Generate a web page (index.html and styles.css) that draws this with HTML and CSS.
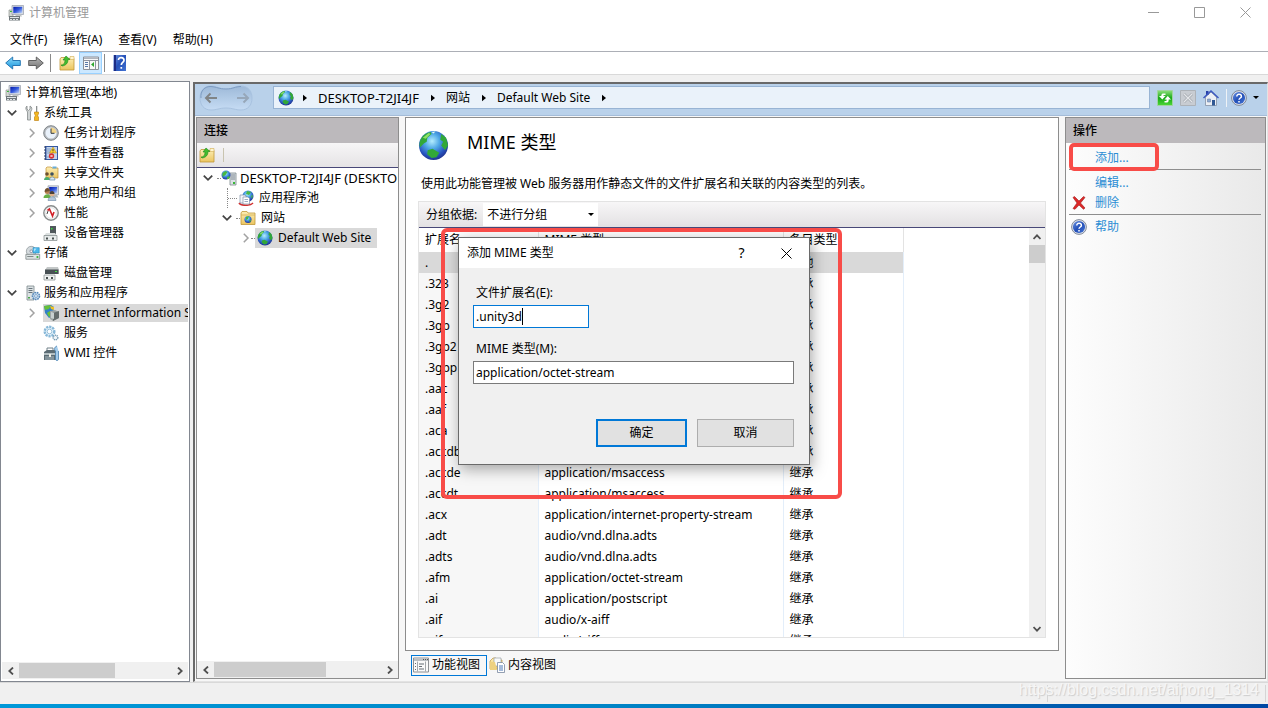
FILE: index.html
```html
<!DOCTYPE html>
<html lang="zh-CN">
<head>
<meta charset="utf-8">
<title>计算机管理</title>
<link rel="stylesheet" href="styles.css">
</head>
<body>
<svg class="sprite" aria-hidden="true">
  <defs>
    <radialGradient id="sea" cx=".45" cy=".35" r=".65"><stop offset="0" stop-color="#b4ecfd"/><stop offset=".4" stop-color="#4fa8e6"/><stop offset=".8" stop-color="#2650bc"/><stop offset="1" stop-color="#203490"/></radialGradient>
    <linearGradient id="blue" x1="0" y1="0" x2="1" y2="1"><stop offset="0" stop-color="#6a92e4"/><stop offset=".5" stop-color="#2450b8"/><stop offset="1" stop-color="#4474d4"/></linearGradient>
    <linearGradient id="screen" x1="0" y1="0" x2="1" y2="1"><stop offset="0" stop-color="#0418a8"/><stop offset=".5" stop-color="#3258dc"/><stop offset="1" stop-color="#c8dcfa"/></linearGradient>
    <linearGradient id="yellow" x1="0" y1="0" x2="0" y2="1"><stop offset="0" stop-color="#fdeeb4"/><stop offset="1" stop-color="#ebc560"/></linearGradient>
    <linearGradient id="green" x1="0" y1="0" x2="0" y2="1"><stop offset="0" stop-color="#8ee07c"/><stop offset=".5" stop-color="#18a818"/><stop offset="1" stop-color="#4cd838"/></linearGradient>
    <linearGradient id="back" x1="0" y1="0" x2="0" y2="1"><stop offset="0" stop-color="#8cdcfa"/><stop offset="1" stop-color="#1894dc"/></linearGradient>
    <linearGradient id="grey" x1="0" y1="0" x2="0" y2="1"><stop offset="0" stop-color="#b8b8b8"/><stop offset="1" stop-color="#747474"/></linearGradient>
    <linearGradient id="pill" x1="0" y1="0" x2="0" y2="1"><stop offset="0" stop-color="#9db9d8"/><stop offset="1" stop-color="#c6dcf4"/></linearGradient>
  </defs>
  <symbol id="i-computer" viewBox="0 0 16 16"><path d="M1 5h4v7H1z" fill="#d4d8d4" stroke="#808880" stroke-width=".6"/><path d="M2 6h2v1H2z" fill="#30c030"/><path d="M4 .5h11.5v9H4z" fill="#d8dce0" stroke="#8a90a0" stroke-width=".6"/><path d="M5.3 1.8h9v6.4h-9z" fill="url(#screen)"/><path d="M8 9.5h5l1 2H7z" fill="#c0c4c4"/><path d="M1 11h11v4.5H1z" fill="#70787c"/><path d="M2 12h9v1H2zm0 2h2v1H2zm3 0h2v1H5zm3 0h2v1H8z" fill="#dfe4e6"/></symbol>
  <symbol id="i-tools" viewBox="0 0 16 16"><path d="M2 1v3l1.500 1.500L5 4V1c2 1 2.500 3 1 5l-.5 1v8h-3V7L2 6C.4 4 .5 2 2 1z" fill="#d0d4d4" stroke="#868c8c" stroke-width=".8"/><path d="M11 1h1.300v6H11z" fill="#8c9090"/><path d="M9.500 7h4v2l-.8 1v1l.8 1v3.500h-4V12l.8-1v-1l-.8-1z" fill="#f4b820" stroke="#b87808" stroke-width=".6"/></symbol>
  <symbol id="i-clock" viewBox="0 0 16 16"><circle cx="8" cy="8" r="7.300" fill="#b8bcc0" stroke="#747a80" stroke-width=".9"/><circle cx="8" cy="8" r="5.500" fill="#e9f1fa"/><path d="M8 8V2.500A5.500 5.500 0 0 1 13.500 8z" fill="#f2d488"/><path d="M8 3.500V8.300h3.500" fill="none" stroke="#303840"/></symbol>
  <symbol id="i-event" viewBox="0 0 16 16"><path d="M2 1h13v14H2z" fill="#3458a0"/><path d="M3.500 2h10.500v12H3.500z" fill="#c4d4ec"/><path d="M1 2h2M1 5h2M1 8h2M1 11h2M1 14h2" stroke="#303c60"/><path d="M4 4h4M4 6h4M4 8h3M4 12h3" stroke="#6888b8" stroke-width=".7"/><path d="M10 2l3.500 6h-7z" fill="#fcd030" stroke="#b88808" stroke-width=".5"/><path d="M10 4v2M10 6.700v.8" stroke="#222" stroke-width=".8"/><circle cx="8.500" cy="11" r="2.700" fill="#d83030"/><path d="M7.500 10l2 2m0-2l-2 2" stroke="#fff" stroke-width=".8"/></symbol>
  <symbol id="i-shared" viewBox="0 0 16 16"><path d="M3 3l1-1h4l1 1h6v10H3z" fill="url(#yellow)" stroke="#c09038" stroke-width=".7"/><path d="M9.500 1.500h4v2h-4z" fill="#68acd8"/><circle cx="4" cy="9" r="1.800" fill="#6c5030"/><circle cx="9" cy="9" r="1.800" fill="#3c5060"/><path d="M1 15c0-4 6-4 6 0z" fill="#4cac6c"/><path d="M6.500 15c0-4 5.500-4 5.500 0z" fill="#d8e8f0" stroke="#5078a0" stroke-width=".6"/></symbol>
  <symbol id="i-users" viewBox="0 0 16 16"><path d="M5 .8h10.500v9H5z" fill="#d8dce4" stroke="#8890a0" stroke-width=".6"/><path d="M6.200 2h8v6.400h-8z" fill="url(#screen)"/><path d="M10 10h4l1.500 2.500H9z" fill="#b0b8bc"/><circle cx="4.300" cy="6.500" r="2.500" fill="#b88050"/><path d="M1.700 7c-.5-5 5.500-5 5.100-1z" fill="#705030"/><path d="M.5 13c0-5 7.500-5 7.500 0z" fill="#68b048"/><circle cx="9" cy="9" r="2.500" fill="#e0b088"/><path d="M6.500 9c0-4 5-4 5 0z" fill="#4a4038"/><path d="M5 15.500c0-5 8-5 8 0z" fill="#b4c8dc" stroke="#587898" stroke-width=".5"/></symbol>
  <symbol id="i-perf" viewBox="0 0 16 16"><circle cx="8" cy="8" r="7.200" fill="#f8f8f8" stroke="#888c8c" stroke-width="1.400"/><circle cx="8" cy="8" r="5.300" fill="#fff" stroke="#c8cccc" stroke-width=".5"/><path d="M4.500 5.500l2 -1.500 3 7 1.500-4" fill="none" stroke="#d02028" stroke-width="1.600"/><path d="M4 9l1-3" stroke="#444"/></symbol>
  <symbol id="i-device" viewBox="0 0 16 16"><path d="M7 1h6v9H7z" fill="#50585c"/><path d="M8 3h1.500v1.500H8z" fill="#38e038"/><path d="M3 8h9l2 3H1z" fill="#dce0e0"/><path d="M1 10.500h13v5H1z" fill="#e8ecec" stroke="#808888" stroke-width=".7"/><path d="M3 12.500h2v2H3zm6 0h2v2H9z" fill="#485050"/></symbol>
  <symbol id="i-storage" viewBox="0 0 18 16"><circle cx="7" cy="6" r="5.500" fill="#d4dadd" stroke="#8c9498" stroke-width=".8"/><circle cx="7" cy="6" r="1.500" fill="#fff" stroke="#889"/><path d="M9 2h7v6H9z" fill="#4cb8ec" stroke="#1880b8" stroke-width=".6"/><path d="M10 3h3L10 7z" fill="#b0e4fa"/><path d="M1 9.500h15.500v5.500H1z" fill="#dfe5e6" stroke="#707878" stroke-width=".8"/><path d="M2.500 12h7" stroke="#707878"/><path d="M13 11.500h2v2h-2z" fill="#30b030"/></symbol>
  <symbol id="i-disk" viewBox="0 0 16 16"><path d="M4 2h11l1 3v4H2V5z" fill="#c4c8c8"/><path d="M2 4.500h13.500V9H2z" fill="#485054"/><path d="M12 6h2v1h-2z" fill="#48e048"/><path d="M1 10h11v5H1z" fill="#f0f2f2" stroke="#808888" stroke-width=".7"/><path d="M3 12h2v2H3zm5 0h2v2H8z" fill="#485050"/></symbol>
  <symbol id="i-server" viewBox="0 0 16 16"><path d="M2 1h7v14H2z" fill="#dce2e4" stroke="#7c888c" stroke-width=".8"/><path d="M3.500 3.500h4M3.500 5.500h4M3.500 7.500h4" stroke="#68747c"/><path d="M3 12h2v1.500H3z" fill="#48a848"/><circle cx="11" cy="11" r="3.500" fill="#c8dcf0" stroke="#5888b8" stroke-width="1.600" stroke-dasharray="1.700 .7"/><circle cx="11" cy="11" r="1.400" fill="#fff" stroke="#5888b8" stroke-width=".7"/></symbol>
  <symbol id="i-iis" viewBox="0 0 16 16"><path d="M1 1l7-1 3 2-1 9-4 2-4-5z" fill="#3080c8"/><path d="M1 1l7-1-2 4-4 1zM4 8l3-2 2 4-3 2z" fill="#68c038"/><path d="M7 1l4 1v3L8 4z" fill="#f0c020"/><path d="M7 6l5-1 4 2v6l-6 3-3-2z" fill="#9ca4a4"/><path d="M10 8l6-2v7l-6 3z" fill="#646c6c"/><path d="M8 7l3 1v6l-3-1z" fill="#c8d0d0"/></symbol>
  <symbol id="i-gears" viewBox="0 0 16 16"><circle cx="6.500" cy="6.500" r="4.800" fill="#e0f0fa" stroke="#88b8d8" stroke-width="2.400" stroke-dasharray="2.200 .9"/><circle cx="6.500" cy="6.500" r="2.300" fill="#fff" stroke="#88b4d0" stroke-width=".8"/><circle cx="12.500" cy="12.500" r="2.300" fill="#f0f6fa" stroke="#789cb4" stroke-width="1.500" stroke-dasharray="1.200 .6"/></symbol>
  <symbol id="i-wmi" viewBox="0 0 16 16"><path d="M4 6V3h6v3" fill="none" stroke="#708088"/><path d="M1 7l3-2h9l2 2v8H1z" fill="#5c6c74"/><path d="M1 8h12v2H1z" fill="#b4c0c4"/><path d="M2 11h9v4H2z" fill="#84949c"/><path d="M6 9h2v3H6z" fill="#f0f0e8"/><path d="M14 1c-3 1-3 4-1.500 5v8c0 2 3 2 3 0V6" fill="#a4ccec" stroke="#4880b0" stroke-width=".8"/></symbol>
  <symbol id="i-globe" viewBox="0 0 16 16"><circle cx="8" cy="8" r="7.500" fill="url(#sea)"/><path d="M1 9c-1-4 2-7.500 5.500-8L7 2 4.800 4 4.500 6 3 7zM12 2l2.500 2 1 4-1.500 2.500L12 8l1-2-1.500-1zM5 10.500l2.500-.8 3.500 2L9.500 14 7 14.500l-2.300-2z" fill="#32a838"/><path d="M2.500 4l3-2.500 1 .5L4 4.500z" fill="#8fe068"/><path d="M7 1l1 .8L9 .8z" fill="#e4faf4"/></symbol>
  <symbol id="i-folderup" viewBox="0 0 16 16"><path d="M1 4l1-1.500h5l1 1h7V15H1z" fill="url(#yellow)" stroke="#c09838" stroke-width=".8"/><path d="M11 1.500h4v3h-4z" fill="#fff5d0" stroke="#d0ac50" stroke-width=".6"/><path d="M2 10c3 0 4-2 4-5H4L7 1l4 3.500H9C9 8 7 10.500 3 11z" fill="#44bc30" stroke="#208818" stroke-width=".6"/></symbol>
  <symbol id="i-panes" viewBox="0 0 16 14"><path d="M.5 1h15v12.500H.5z" fill="#f8f8f8" stroke="#8c9098"/><path d="M1 1.500h14v1.500H1z" fill="#b0b4bc"/><path d="M1 4.500h14M6.500 5v8M12.500 5v8" stroke="#9094a0"/><path d="M2 6.500h3M2 8.500h3M2 10.500h3" stroke="#5878a8"/><path d="M11 6v5L8 8.500z" fill="#30a830"/></symbol>
  <symbol id="i-book" viewBox="0 0 14 16"><path d="M.5 0H13v16H.5z" fill="url(#blue)"/><path d="M1 0h2v16H1z" fill="#1c2c84"/><path d="M5.500 5c0-3.500 5.500-3 5.500.2C11 7.500 8.300 7.500 8.300 10M8.300 12v1.800" fill="none" stroke="#fff" stroke-width="1.700"/></symbol>
  <symbol id="i-help" viewBox="0 0 16 16"><circle cx="8" cy="8" r="7.400" fill="#dfe3ec" stroke="#747e90" stroke-width=".9"/><circle cx="8" cy="8" r="6.100" fill="url(#blue)"/><path d="M5.800 6.400c0-3 4.600-2.600 4.600 0C10.400 8 8 8 8 9.800M8 11v1.500" fill="none" stroke="#fff" stroke-width="1.500"/></symbol>
  <symbol id="i-back" viewBox="0 0 16 14"><path d="M.7 7l7-6v3.500h7.600v5H7.700V13z" fill="url(#back)" stroke="#2878b4"/></symbol>
  <symbol id="i-forward" viewBox="0 0 16 14"><path d="M15.300 7l-7-6v3.500H.7v5h7.600V13z" fill="url(#grey)" stroke="#606060"/></symbol>
  <symbol id="i-siteserver" viewBox="0 0 16 16"><path d="M9 3h6v12H9z" fill="#dce2e6" stroke="#7c888c" stroke-width=".8"/><path d="M10 5h4M10 7h4M10 9h4" stroke="#68747c" stroke-width=".8"/><path d="M12 12h2v2h-2z" fill="#38b838"/><circle cx="5" cy="5" r="4.500" fill="url(#sea)"/><path d="M1.500 3l3-2 2 1-2 3-3 2zM6 7l3-1-1 3-2 0z" fill="#48b840"/></symbol>
  <symbol id="i-pool" viewBox="0 0 16 16"><circle cx="10" cy="6" r="5.500" fill="url(#sea)"/><path d="M9 1l4 1-2 3-3-1zM13 6l2-1-1 4z" fill="#48b840"/><path d="M1 13c2 3 11 3 14 0" fill="none" stroke="#d03030" stroke-width="1.600"/><path d="M2 5h5l1 1v7H2z" fill="#f4f6fa" stroke="#8090a8" stroke-width=".7"/><path d="M5 7h5l1.500 1.500V14H5z" fill="#fff" stroke="#8090a8" stroke-width=".7"/><path d="M6.500 9.500H10M6.500 11.500H10" stroke="#7088a8" stroke-width=".7"/></symbol>
  <symbol id="i-sites" viewBox="0 0 16 16"><path d="M1 3l1-1.500h5l1 1.500h7v11.500H1z" fill="url(#yellow)" stroke="#c09838" stroke-width=".8"/><path d="M1 5h14" stroke="#d4b058" stroke-width=".8"/><circle cx="8" cy="9.500" r="3.500" fill="url(#sea)"/><path d="M6 7l3-1-1 3-2 1zM9 10l2 0-1 2.500z" fill="#48b840"/></symbol>
  <symbol id="i-refresh" viewBox="0 0 16 16"><path d="M.5.500h15v15H.5z" fill="url(#green)" stroke="#a0d4a0"/><path d="M8.500 3.500H6C4.500 3.500 4.300 5 4.300 6H2l3.300 3.500L8.500 6H6.500V5h2zM7.500 12.500H10c1.500 0 1.700-1.500 1.700-3H14L10.800 6 7.500 9.500h2V11h-2z" fill="#fff"/></symbol>
  <symbol id="i-stop" viewBox="0 0 16 16"><path d="M.5.500h15v15H.5z" fill="#c8ccd2" stroke="#adb2b8"/><path d="M4 4l8 8m0-8l-8 8" stroke="#a4a8b0" stroke-width="2.600"/><path d="M4 4l8 8m0-8l-8 8" stroke="#e4e6ea" stroke-width="1.200"/></symbol>
  <symbol id="i-home" viewBox="0 0 16 16"><path d="M2.500 7L8 2l5.500 5v8.500h-11z" fill="#eceff4" stroke="#8490a4" stroke-width=".8"/><path d="M3 1h2.500v4H3z" fill="#2840a8"/><path d="M.5 8L8 1l7.500 7" fill="none" stroke="#3c58c0" stroke-width="1.500"/><path d="M9 10h3v5.500H9z" fill="#305894"/><path d="M4.500 9h3v3h-3z" fill="#90acd0" stroke="#5870a0" stroke-width=".5"/></symbol>
  <symbol id="i-delete" viewBox="0 0 14 14"><path d="M1 1.500L2.500.500 7 5l4.500-4.500L13 1.500 8.500 7l4.500 5-1.500 1.300L7 9l-4 4.300-2-.8L5 7z" fill="#dc2828" stroke="#a01c1c" stroke-width=".6"/></symbol>
  <symbol id="i-features" viewBox="0 0 16 15"><path d="M.5.500h15v14H.5z" fill="#fafafa" stroke="#8c9094"/><path d="M1 1h14v2.500H1z" fill="#bcc0c4"/><path d="M10 2h1m1 0h1m1 0h1" stroke="#555"/><path d="M4.500 4v10M12.500 4v10" stroke="#a4a8ac"/><path d="M2 6h1m-1 3h1m-1 3h1m3-5.500h5M6 9h3m-3 2.500h5" stroke="#656c74"/></symbol>
  <symbol id="i-content" viewBox="0 0 16 16"><path d="M1 4l3-3h3l1 2h5v9H1z" fill="url(#yellow)" stroke="#bc9444" stroke-width=".7"/><path d="M5 1h7v8H5z" fill="#f8f9fa" stroke="#8c949c" stroke-width=".6"/><path d="M1 5h5l2 8H1z" fill="#eed180"/><path d="M8.500 5.500h5l2 2v8h-7z" fill="#fff" stroke="#7888a0" stroke-width=".8"/><path d="M10 9h4M10 11h4M10 13h4" stroke="#4c78b8"/></symbol>
  <symbol id="i-down" viewBox="0 0 9 6"><path d="M.7.800L4.500 4.600 8.300.800" fill="none" stroke="#444" stroke-width="1.600"/></symbol>
  <symbol id="i-right" viewBox="0 0 6 10"><path d="M.8.700L5 5 .8 9.300" fill="none" stroke="#a2a2a2" stroke-width="1.500"/></symbol>
  <symbol id="i-sright" viewBox="0 0 6 8"><path d="M1 .500L4.700 4 1 7.500" fill="none" stroke="#505050" stroke-width="1.800"/></symbol>
  <symbol id="i-sleft" viewBox="0 0 6 8"><path d="M5 .500L1.300 4 5 7.500" fill="none" stroke="#505050" stroke-width="1.800"/></symbol>
  <symbol id="i-sup" viewBox="0 0 8 6"><path d="M.5 5L4 1.300 7.500 5" fill="none" stroke="#505050" stroke-width="1.800"/></symbol>
  <symbol id="i-sdown" viewBox="0 0 8 6"><path d="M.5 1L4 4.700 7.500 1" fill="none" stroke="#505050" stroke-width="1.800"/></symbol>
  <symbol id="i-tri" viewBox="0 0 5 8"><path d="M0 0l5 4-5 4z"/></symbol>
  <symbol id="i-drop" viewBox="0 0 6 3"><path d="M0 0h6L3 3z"/></symbol>
</svg>

<div class="window">
  <header class="titlebar">
    <svg class="icon"><use href="#i-computer"/></svg>
    <span class="title">计算机管理</span>
    <div class="caption-buttons">
      <button class="caption" aria-label="最小化"><svg viewBox="0 0 11 11"><path d="M0 5.500h11"/></svg></button>
      <button class="caption" aria-label="最大化"><svg viewBox="0 0 11 11"><path d="M.5.500h10v10H.5z"/></svg></button>
      <button class="caption" aria-label="关闭"><svg viewBox="0 0 11 11"><path d="M.5.500l10 10m0-10l-10 10"/></svg></button>
    </div>
  </header>
  <nav class="menubar">
    <button>文件(F)</button><button>操作(A)</button><button>查看(V)</button><button>帮助(H)</button>
  </nav>
  <div class="toolbar">
    <button aria-label="后退"><svg class="icon"><use href="#i-back"/></svg></button>
    <button aria-label="前进"><svg class="icon"><use href="#i-forward"/></svg></button>
    <i class="sep"></i>
    <button class="up" aria-label="上一级"><svg class="icon"><use href="#i-folderup"/></svg></button>
    <button class="pressed" aria-label="显示/隐藏控制台树"><svg class="icon"><use href="#i-panes"/></svg></button>
    <i class="sep"></i>
    <button class="book" aria-label="帮助"><svg class="icon"><use href="#i-book"/></svg></button>
  </div>

  <main class="workspace">
    <aside class="console">
      <ul class="tree">
        <li class="root"><svg class="icon"><use href="#i-computer"/></svg><span>计算机管理(本地)</span></li>
        <li class="l1"><svg class="exp"><use href="#i-down"/></svg><svg class="icon"><use href="#i-tools"/></svg><span>系统工具</span></li>
        <li class="l2"><svg class="exp"><use href="#i-right"/></svg><svg class="icon"><use href="#i-clock"/></svg><span>任务计划程序</span></li>
        <li class="l2"><svg class="exp"><use href="#i-right"/></svg><svg class="icon"><use href="#i-event"/></svg><span>事件查看器</span></li>
        <li class="l2"><svg class="exp"><use href="#i-right"/></svg><svg class="icon"><use href="#i-shared"/></svg><span>共享文件夹</span></li>
        <li class="l2"><svg class="exp"><use href="#i-right"/></svg><svg class="icon"><use href="#i-users"/></svg><span>本地用户和组</span></li>
        <li class="l2"><svg class="exp"><use href="#i-right"/></svg><svg class="icon"><use href="#i-perf"/></svg><span>性能</span></li>
        <li class="l2"><svg class="exp"></svg><svg class="icon"><use href="#i-device"/></svg><span>设备管理器</span></li>
        <li class="l1"><svg class="exp"><use href="#i-down"/></svg><svg class="icon"><use href="#i-storage"/></svg><span>存储</span></li>
        <li class="l2"><svg class="exp"></svg><svg class="icon"><use href="#i-disk"/></svg><span>磁盘管理</span></li>
        <li class="l1"><svg class="exp"><use href="#i-down"/></svg><svg class="icon"><use href="#i-server"/></svg><span>服务和应用程序</span></li>
        <li class="l2"><svg class="exp"><use href="#i-right"/></svg><span class="node wide"><svg class="icon"><use href="#i-iis"/></svg><span>Internet Information Services</span></span></li>
        <li class="l2"><svg class="exp"></svg><svg class="icon"><use href="#i-gears"/></svg><span>服务</span></li>
        <li class="l2"><svg class="exp"></svg><svg class="icon"><use href="#i-wmi"/></svg><span>WMI 控件</span></li>
      </ul>
      <div class="hscroll"><button aria-label="向左"><svg><use href="#i-sleft"/></svg></button><div class="track"><div class="thumb"></div></div><button aria-label="向右"><svg><use href="#i-sright"/></svg></button></div>
    </aside>

    <section class="iis">
      <div class="address-row">
        <div class="travel">
          <svg class="pill" viewBox="0 0 54 26"><path d="M12 1C18 1 20 4 27 4S36 1 42 1C49 1 53 6 53 13S49 25 42 25C36 25 34 23 27 23S18 25 12 25C5 25 1 20 1 13S5 1 12 1z" fill="url(#pill)" stroke="#a8c2e0"/><path d="M2 13C1 6 6 1 12 1.500S20 4 27 4s9-2.500 15-2.500" fill="none" stroke="#7d9cc2"/><path d="M18 13H7m4.500-4.500L7 13l4.500 4.500" fill="none" stroke="#808486" stroke-width="2"/><path d="M38 13h11m-4.500-4.500L49 13l-4.500 4.500" fill="none" stroke="#97a7b9" stroke-width="2"/></svg>
        </div>
        <div class="crumbs">
          <svg class="icon"><use href="#i-globe"/></svg>
          <svg class="tri"><use href="#i-tri"/></svg><span class="host">DESKTOP-T2JI4JF</span>
          <svg class="tri"><use href="#i-tri"/></svg><span>网站</span>
          <svg class="tri"><use href="#i-tri"/></svg><span>Default Web Site</span>
          <svg class="tri"><use href="#i-tri"/></svg>
        </div>
        <div class="address-tools">
          <button aria-label="刷新"><svg class="icon"><use href="#i-refresh"/></svg></button>
          <button aria-label="停止"><svg class="icon"><use href="#i-stop"/></svg></button>
          <button aria-label="主页"><svg class="icon"><use href="#i-home"/></svg></button>
          <button class="helpdrop" aria-label="帮助"><svg class="icon"><use href="#i-help"/></svg><svg class="drop"><use href="#i-drop"/></svg></button>
        </div>
      </div>

      <div class="panes">
        <aside class="panel connections">
          <h2>连接</h2>
          <div class="minibar"><button aria-label="连接"><svg class="icon"><use href="#i-folderup"/></svg></button><i></i></div>
          <ul class="tree">
            <li class="c0"><svg class="exp"><use href="#i-down"/></svg><i class="dots"></i><svg class="icon"><use href="#i-siteserver"/></svg><span class="host">DESKTOP-T2JI4JF (DESKTOP-T2JI4JF\Administrator)</span></li>
            <li class="c1 branch"><i class="dots long"></i><svg class="icon"><use href="#i-pool"/></svg><span>应用程序池</span></li>
            <li class="c1"><svg class="exp"><use href="#i-down"/></svg><i class="dots"></i><svg class="icon"><use href="#i-sites"/></svg><span>网站</span></li>
            <li class="c2"><svg class="exp"><use href="#i-right"/></svg><i class="dots"></i><span class="node"><svg class="icon"><use href="#i-globe"/></svg><span>Default Web Site</span></span></li>
          </ul>
          <div class="hscroll"><button aria-label="向左"><svg><use href="#i-sleft"/></svg></button><div class="track"><div class="thumb mid"></div></div><button aria-label="向右"><svg><use href="#i-sright"/></svg></button></div>
        </aside>

        <div class="center">
          <section class="feature">
            <div class="feature-head"><svg><use href="#i-globe"/></svg><h1>MIME 类型</h1></div>
            <p>使用此功能管理被 Web 服务器用作静态文件的文件扩展名和关联的内容类型的列表。</p>
            <div class="listbox">
              <div class="groupbar">
                <label for="group">分组依据:</label>
                <span class="combo"><select id="group"><option>不进行分组</option></select><svg class="drop"><use href="#i-drop"/></svg></span>
              </div>
              <div class="listview">
                <div class="rows">
                  <table>
                    <thead><tr><th>扩展名</th><th>MIME 类型</th><th>条目类型</th></tr></thead>
                    <tbody>
                      <tr class="selected"><td>.</td><td>application/octet-stream</td><td>本地</td></tr>
                      <tr><td>.323</td><td>text/h323</td><td>继承</td></tr>
                      <tr><td>.3g2</td><td>video/3gpp2</td><td>继承</td></tr>
                      <tr><td>.3gp</td><td>video/3gpp</td><td>继承</td></tr>
                      <tr><td>.3gp2</td><td>video/3gpp2</td><td>继承</td></tr>
                      <tr><td>.3gpp</td><td>video/3gpp</td><td>继承</td></tr>
                      <tr><td>.aac</td><td>audio/aac</td><td>继承</td></tr>
                      <tr><td>.aaf</td><td>application/octet-stream</td><td>继承</td></tr>
                      <tr><td>.aca</td><td>application/octet-stream</td><td>继承</td></tr>
                      <tr><td>.accdb</td><td>application/msaccess</td><td>继承</td></tr>
                      <tr><td>.accde</td><td>application/msaccess</td><td>继承</td></tr>
                      <tr><td>.accdt</td><td>application/msaccess</td><td>继承</td></tr>
                      <tr><td>.acx</td><td>application/internet-property-stream</td><td>继承</td></tr>
                      <tr><td>.adt</td><td>audio/vnd.dlna.adts</td><td>继承</td></tr>
                      <tr><td>.adts</td><td>audio/vnd.dlna.adts</td><td>继承</td></tr>
                      <tr><td>.afm</td><td>application/octet-stream</td><td>继承</td></tr>
                      <tr><td>.ai</td><td>application/postscript</td><td>继承</td></tr>
                      <tr><td>.aif</td><td>audio/x-aiff</td><td>继承</td></tr>
                      <tr><td>.aifc</td><td>audio/aiff</td><td>继承</td></tr>
                    </tbody>
                  </table>
                </div>
                <div class="vscroll"><button aria-label="向上"><svg><use href="#i-sup"/></svg></button><div class="thumb"></div><button aria-label="向下"><svg><use href="#i-sdown"/></svg></button></div>
              </div>
            </div>
          </section>
          <div class="views">
            <button class="active"><svg class="icon"><use href="#i-features"/></svg>功能视图</button>
            <button><svg class="icon"><use href="#i-content"/></svg>内容视图</button>
          </div>
        </div>

        <aside class="panel actions">
          <h2>操作</h2>
          <ul>
            <li class="add"><a href="#">添加...</a><span class="mark"></span></li>
            <li class="edit"><a href="#">编辑...</a></li>
            <li><svg class="icon del"><use href="#i-delete"/></svg><a href="#">删除</a></li>
            <li class="help"><svg class="icon"><use href="#i-help"/></svg><a href="#">帮助</a></li>
          </ul>
        </aside>
      </div>
    </section>
  </main>
  <footer class="statusbar"><span></span><span></span><span></span><em>https://blog.csdn.net/aihong_1314</em></footer>
  <div class="taskbar"></div>

  <form class="dialog" role="dialog" aria-labelledby="dlg-title">
    <div class="dialog-title"><span id="dlg-title">添加 MIME 类型</span><button type="button" aria-label="帮助">?</button><button type="button" aria-label="关闭"><svg viewBox="0 0 11 11"><path d="M.5.500l10 10m0-10l-10 10"/></svg></button></div>
    <div class="dialog-body">
      <label for="ext">文件扩展名(E):</label>
      <div class="focused"><input id="ext" type="text" value=".unity3d" spellcheck="false"><i class="caret"></i></div>
      <label for="mime">MIME 类型(M):</label>
      <input id="mime" type="text" value="application/octet-stream" spellcheck="false">
      <div class="dialog-buttons"><button type="button" class="default">确定</button><button type="button">取消</button></div>
    </div>
  </form>
  <div class="frame"></div>
</div>
</body>
</html>
```
FILE: styles.css
```css
* { box-sizing: border-box; }
html, body { height: 100%; }
body {
  margin: 0;
  overflow: hidden;
  font: 12px/20px "Noto Sans", "Noto Sans CJK SC", sans-serif;
  color: #000;
  background: #f0f0f0;
}
button, input, select { font: inherit; color: inherit; margin: 0; padding: 0; border: 0; border-radius: 0; background: none; }
ul { list-style: none; margin: 0; padding: 0; }
h1, h2, p { margin: 0; font-weight: normal; }
a { color: #2a8dd4; text-decoration: none; }
svg { display: block; flex: none; }
.sprite { position: absolute; width: 0; height: 0; }
.icon { width: 16px; height: 16px; }
.host { font-size: 13px; }

.window { position: relative; height: 100%; display: flex; flex-direction: column; }
.titlebar { display: flex; align-items: center; height: 25px; padding-left: 8px; background: #fff; }
.title { margin-left: 5px; color: #999; }
.caption-buttons { display: flex; margin-left: auto; }
.caption { width: 46px; height: 25px; display: grid; place-items: center; }
.caption svg { width: 11px; height: 11px; fill: none; stroke: #999; }
.menubar { display: flex; gap: 16px; height: 26px; padding: 5px 10px 0; background: #fff; }
.menubar button { height: 20px; }
.toolbar { display: flex; align-items: center; height: 24px; padding-left: 5px; border-top: 1px solid #acafb6; border-bottom: 1px solid #d9d9d9; background: #fff; }
.toolbar button { width: 23px; height: 22px; }
.toolbar .up { width: 20px; }
.toolbar .pressed { width: 23px; padding-left: 3px; border: 1px solid #99d1ff; background: #cce8ff; }
.toolbar .sep { width: 1px; height: 18px; margin: 0 8px 0 -1px; background: #8a8a8a; }
.toolbar .pressed + .sep { margin: 0 7px 0 2px; }

.workspace { flex: 1; min-height: 0; display: flex; gap: 3px; padding-top: 6px; }
.console { width: 190px; flex: none; display: flex; flex-direction: column; padding: 1px 1px 2px; border: 1px solid #828790; background: #fff; }
.tree { flex: 1; min-height: 0; overflow: hidden; }
.tree li { display: flex; align-items: center; height: 20px; white-space: nowrap; }
.tree .exp { width: 10px; height: 10px; margin-right: 8px; }
.console .icon { margin-right: 5px; }
.root { padding-left: 3px; }
.l1 { padding-left: 5px; }
.l1 .icon { margin-right: 3px; }
.l2 { padding-left: 25px; }
.l2 .exp { margin-right: 6px; }
.node { display: flex; align-items: center; height: 18px; background: #d9d9d9; }
.wide { flex: 1; }

.hscroll { display: flex; align-items: center; height: 17px; flex: none; background: #f0f0f0; }
.hscroll button { width: 17px; height: 15px; display: grid; place-items: center; }
.hscroll svg { width: 6px; height: 8px; }
.hscroll .track { flex: 1; }
.thumb { height: 15px; background: #cdcdcd; }
.hscroll .thumb { width: 63%; }
.hscroll .mid { width: 67%; }

.iis { flex: 1; min-width: 0; display: flex; flex-direction: column; margin-top: 1px; border: solid; border-width: 2px 1px 1px 2px; border-color: #696969 #e3e3e3 #e3e3e3 #696969; background: #f7f7f7; }
.address-row { display: flex; align-items: center; height: 32px; padding: 0 5px 4px 4px; border-bottom: 1px solid #a4bcd8; background: #b9d1ea; }
.travel { width: 74px; }
.pill { width: 54px; height: 26px; }
.crumbs { flex: 1; display: flex; align-items: center; height: 23px; padding-left: 4px; border: 1px solid #98b4d4; background: #eaf2fa; }
.crumbs .tri { width: 4px; height: 8px; margin: 0 11px 0 12px; }
.crumbs .icon + .tri { margin-left: 9px; }
.address-tools { display: flex; align-items: center; padding-left: 7px; }
.address-tools button { width: 23px; height: 18px; }
.address-tools .helpdrop { display: flex; align-items: center; gap: 6px; width: 36px; padding-left: 4px; border-left: 1px solid #eef2f6; }
.drop { width: 6px; height: 3px; }

.panes { flex: 1; min-height: 0; display: flex; gap: 6px; padding: 1px 1px 2px 1px; }
.panel { display: flex; flex-direction: column; border: 1px solid #8d8d8d; background: #fff; }
.panel h2 { height: 25px; padding-left: 7px; line-height: 25px; font-size: 12px; font-weight: 500; background: #bcb9bc; }
.connections { width: 203px; flex: none; }
.minibar { display: flex; align-items: center; height: 25px; gap: 8px; padding-left: 2px; border-bottom: 1px solid #484878; background: linear-gradient(#f7f6f7, #e5e3e5); }
.minibar button { width: 16px; }
.minibar i { width: 1px; height: 14px; background: #c9c4b0; }
.connections .exp { margin-right: 4px; }
.connections .icon { margin-right: 5px; }
.connections .c0 .icon { margin-right: 3px; }
.c0 { padding-left: 6px; }
.c1 { padding-left: 25px; }
.branch { padding-left: 30px; }
.c2 { padding-left: 44px; }
.connections .c2 .exp { margin-right: 0; }
.dots { width: 4px; border-top: 1px dotted #888; flex: none; }
.dots.long { width: 11px; height: 20px; border-left: 1px dotted #888; border-top: 0; background: repeating-linear-gradient(90deg, #888 0 1px, transparent 1px 2px) 0 10px / 11px 1px no-repeat; }
.connections .node { height: 20px; padding: 0 6px 0 2px; }

.center { flex: 1; min-width: 0; display: flex; flex-direction: column; }
.feature { flex: 1; min-height: 0; display: flex; flex-direction: column; padding: 12px; border: 1px solid #8d8d8d; background: #fff; }
.feature-head { display: flex; gap: 18px; height: 44px; }
.feature-head svg { width: 31px; height: 31px; }
.feature-head h1 { font-size: 18px; line-height: 25px; }
.feature p { height: 27px; padding-left: 3px; }
.listbox { flex: 1; min-height: 0; display: flex; flex-direction: column; border: 1px solid #e3e3e3; }
.groupbar { display: flex; align-items: center; height: 26px; flex: none; padding-left: 7px; border-bottom: 1px solid #484878; background: linear-gradient(#f7f6f7, #e3e1e3); }
.combo { display: flex; align-items: center; width: 115px; height: 23px; margin-left: 6px; background: #fff; }
.combo select { flex: 1; appearance: none; padding-left: 4px; line-height: 20px; }
.combo .drop { margin-right: 4px; }
.listview { flex: 1; min-height: 0; display: flex; }
.rows { flex: 1; overflow: hidden; }
table { width: 485px; table-layout: fixed; border-collapse: collapse; }
th, td { height: 21px; padding: 0 6px; line-height: 20px; text-align: left; font-weight: normal; white-space: nowrap; border-right: 1px solid #e3eefa; }
th { height: 24px; border-color: #e3e3e3; }
th:first-child { width: 119px; }
th:nth-child(2) { width: 245px; }
td:first-child { background: #f7f7f7; }
.selected td { background: #d9d9d9; }
.vscroll { width: 16px; display: flex; flex-direction: column; background: #f0f0f0; }
.vscroll button { height: 17px; display: grid; place-items: center; }
.vscroll button:last-child { margin-top: auto; }
.vscroll svg { width: 8px; height: 6px; }
.vscroll .thumb { height: 18px; }
.views { display: flex; align-items: center; gap: 1px; height: 28px; flex: none; padding-left: 6px; }
.views button { display: flex; align-items: center; gap: 3px; height: 21px; padding-right: 6px; border: 1px solid transparent; }
.views .active { width: 76px; padding-left: 1px; border-color: #0078d7; }

.actions { width: 201px; flex: none; background: linear-gradient(90deg, #fdfdfd, #e9e9e9); }
.actions ul { padding: 4px 4px 0 3px; }
.actions li { position: relative; display: flex; align-items: center; height: 20px; padding-left: 26px; }
.actions li.add { height: 23px; margin-bottom: 3px; border-bottom: 1px solid #8e8e8e; }
.actions .icon { width: 16px; margin: 0 8px 0 -24px; }
.actions .del { height: 14px; }
.actions li.help { height: 24px; padding-top: 1px; margin-top: 1px; border-top: 1px solid #8e8e8e; }
.mark { position: absolute; left: 0; top: -4px; width: 90px; height: 28px; border: 4px solid #f84c48; border-radius: 5px; }

.statusbar { position: relative; display: flex; justify-content: flex-end; height: 22px; padding: 2px 2px 2px 0; border-top: 1px solid #d9d9d9; }
.statusbar span { width: 133px; border-right: 1px solid #d5d5d5; }
.statusbar span:nth-child(3) { width: 85px; }
.statusbar em { position: absolute; right: 9px; top: -2px; font: 16px/18px "Liberation Sans", sans-serif; color: #f6f6f6; text-shadow: 1px 1px 1px #ccc; }
.taskbar { height: 4px; background: linear-gradient(90deg, #0098d8, #0088c8 45%, #0048a4); }

.dialog { position: absolute; left: 458px; top: 237px; width: 352px; height: 228px; display: flex; flex-direction: column; border: 1px solid #6a6a6a; background: #f0f0f0; box-shadow: 2px 4px 14px rgba(0, 0, 0, .35); }
.dialog-title { display: flex; align-items: center; height: 30px; padding-left: 8px; background: #fff; }
.dialog-title span { flex: 1; }
.dialog-title button { width: 45px; height: 30px; display: grid; place-items: center; font-size: 14px; }
.dialog-title svg { width: 11px; height: 11px; fill: none; stroke: #000; }
.dialog-body { flex: 1; display: flex; flex-direction: column; padding: 15px 15px 17px 14px; }
.dialog-body label { height: 20px; margin-left: 3px; }
.dialog-body input { height: 23px; width: 100%; margin: 2px 0 11px; padding: 0 2px; line-height: 20px; border: 1px solid #7a7a7a; background: #fff; outline: 0; }
.dialog-body .focused { position: relative; width: 116px; }
.dialog-body .focused input { border-color: #0078d7; }
.caret { position: absolute; left: 49px; top: 5px; width: 1px; height: 17px; background: #000; }
.dialog-buttons { display: flex; justify-content: flex-end; gap: 10px; margin-top: auto; }
.dialog-buttons button { width: 97px; height: 28px; border: 1px solid #adadad; background: #e1e1e1; }
.dialog-buttons .default { width: 91px; border: 2px solid #0078d7; }
.frame { position: absolute; left: 441px; top: 228px; width: 401px; height: 271px; border: 4px solid #f84c48; border-radius: 6px; pointer-events: none; }
```
